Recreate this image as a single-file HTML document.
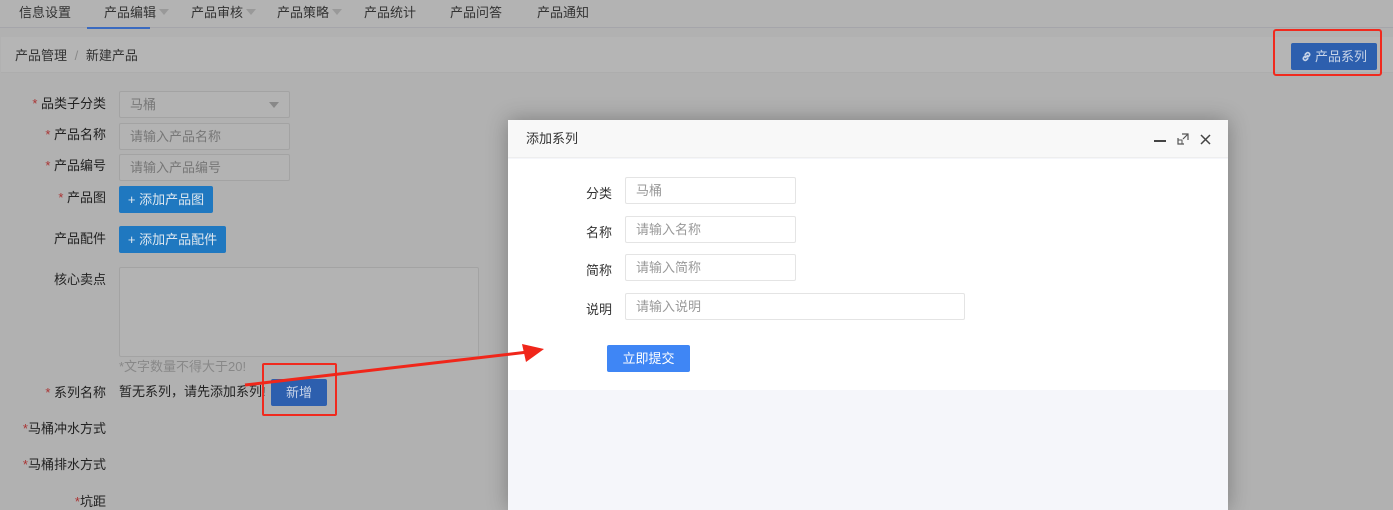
<!DOCTYPE html>
<html style="background:#b1b1b1"><head><meta charset="utf-8"><style>
*{margin:0;padding:0;box-sizing:border-box}
body{width:1393px;height:510px;overflow:hidden;background:#b1b1b1;font-family:"Liberation Sans","Noto Sans CJK SC",sans-serif;font-size:13px;line-height:16px;color:#222;position:relative}
.a{position:absolute;white-space:nowrap}
.bg{left:0;top:0;width:1393px;height:510px;background:#b1b1b1}
.nav{left:0;top:0;width:1393px;height:28px;background:#b3b3b3;border-bottom:1px solid #a5a5aa}
.ni{top:5px;font-size:13px;color:#333}
.tri{display:inline-block;width:0;height:0;border-left:5px solid transparent;border-right:5px solid transparent;border-top:6px solid #999;margin-left:3px;vertical-align:2px}
.bc{left:1px;top:37px;width:1392px;height:36px;background:#b5b5b5;border-bottom:1px solid #adadad}
.lbl{font-size:13px;color:#222;text-align:right;width:100px}
.req{color:#a33}
.inp{background:#b3b3b3;border:1px solid #a3a3a3;border-radius:2px;color:#777;padding-left:10px;font-size:13px}
.btn{background:#1f78c0;color:#dfe8ef;font-size:13px;border-radius:2px;text-align:center}
.dlg{left:508px;top:120px;width:720px;height:390px;background:#f5f6fa;box-shadow:0 0 20px rgba(0,0,0,.3)}
.dh{left:0;top:0;width:720px;height:38px;background:#f8f8f8;border-bottom:1px solid #eee}
.db{left:0;top:39px;width:720px;height:231px;background:#fff}
.di{border:1px solid #e4e4e4;border-radius:2px;height:27px;color:#999;padding-left:10px;line-height:25px;font-size:13px;background:#fff}
.dl{font-size:13px;color:#333}
</style></head><body>
<div class="a bg"></div>
<div class="a nav"></div>
<div class="a ni" style="left:19px">信息设置</div>
<div class="a ni" style="left:104px">产品编辑<span class="tri"></span></div>
<div class="a" style="left:87px;top:27px;width:63px;height:2px;background:#3a6ac0"></div>
<div class="a ni" style="left:191px">产品审核<span class="tri"></span></div>
<div class="a ni" style="left:277px">产品策略<span class="tri"></span></div>
<div class="a ni" style="left:364px">产品统计</div>
<div class="a ni" style="left:450px">产品问答</div>
<div class="a ni" style="left:537px">产品通知</div>
<div class="a bc"></div>
<div class="a" style="left:15px;top:48px;color:#333">产品管理 <span style="color:#888;margin:0 4px">/</span> 新建产品</div>
<div class="a" style="left:1273px;top:29px;width:109px;height:47px;border:2px solid #f02a1e;border-radius:3px"></div>
<div class="a btn" style="left:1291px;top:43px;width:86px;height:27px;line-height:27px;background:#2d5fae;color:#c8d4e8">
<svg width="11" height="11" viewBox="0 0 12 12" style="vertical-align:-1px;margin-right:3px"><g fill="none" stroke="#c8d4e8" stroke-width="1.8" stroke-linecap="round"><path d="M5 7 L7 5"/><path d="M4.5 5.5 L3 7 a2 2 0 0 0 2.8 2.8 L7.3 8.3"/><path d="M7.5 6.5 L9 5 a2 2 0 0 0 -2.8 -2.8 L4.7 3.7"/></g></svg>产品系列</div>

<div class="a lbl" style="left:6px;top:96px"><span class="req">* </span>品类子分类</div>
<div class="a inp" style="left:119px;top:91px;width:171px;height:27px;line-height:25px">马桶<span class="tri" style="position:absolute;right:10px;top:10px;border-top-color:#888"></span></div>
<div class="a lbl" style="left:6px;top:127px"><span class="req">* </span>产品名称</div>
<div class="a inp" style="left:119px;top:123px;width:171px;height:27px;line-height:25px">请输入产品名称</div>
<div class="a lbl" style="left:6px;top:158px"><span class="req">* </span>产品编号</div>
<div class="a inp" style="left:119px;top:154px;width:171px;height:27px;line-height:25px">请输入产品编号</div>
<div class="a lbl" style="left:6px;top:190px"><span class="req">* </span>产品图</div>
<div class="a btn" style="left:119px;top:186px;width:94px;height:27px;line-height:27px">+ 添加产品图</div>
<div class="a lbl" style="left:6px;top:231px">产品配件</div>
<div class="a btn" style="left:119px;top:226px;width:107px;height:27px;line-height:27px">+ 添加产品配件</div>
<div class="a lbl" style="left:6px;top:272px">核心卖点</div>
<div class="a inp" style="left:119px;top:267px;width:360px;height:90px"></div>
<div class="a" style="left:119px;top:359px;color:#888">*文字数量不得大于20!</div>
<div class="a lbl" style="left:6px;top:385px"><span class="req">* </span>系列名称</div>
<div class="a" style="left:119px;top:384px;color:#222">暂无系列，请先添加系列!</div>
<div class="a" style="left:262px;top:363px;width:75px;height:53px;border:2px solid #f02a1e;border-radius:2px"></div>
<div class="a btn" style="left:271px;top:379px;width:56px;height:27px;line-height:27px;background:#2d5fae;color:#c8d4e8">新增</div>
<div class="a lbl" style="left:6px;top:421px"><span class="req">*</span>马桶冲水方式</div>
<div class="a lbl" style="left:6px;top:457px"><span class="req">*</span>马桶排水方式</div>
<div class="a lbl" style="left:6px;top:494px"><span class="req">*</span>坑距</div>

<div class="a dlg">
<div class="a dh"></div>
<div class="a" style="left:18px;top:11px;color:#333">添加系列</div>
<div class="a" style="left:646px;top:20px;width:12px;height:1.5px;background:#444"></div>
<svg class="a" style="left:669px;top:13px" width="12" height="12" viewBox="0 0 12 12"><path d="M1 5V11H7 M5 1H11V7 M11 1L6 6" fill="none" stroke="#555" stroke-width="1.2"/><rect x="1" y="7" width="4" height="4" fill="none" stroke="#555" stroke-width="1"/></svg>
<svg class="a" style="left:692px;top:14px" width="11" height="11" viewBox="0 0 11 11"><path d="M1 1L10 10M10 1L1 10" stroke="#444" stroke-width="1.5"/></svg>
<div class="a db"></div>
<div class="a dl" style="left:78px;top:66px">分类</div>
<div class="a di" style="left:117px;top:57px;width:171px">马桶</div>
<div class="a dl" style="left:78px;top:105px">名称</div>
<div class="a di" style="left:117px;top:96px;width:171px">请输入名称</div>
<div class="a dl" style="left:78px;top:143px">简称</div>
<div class="a di" style="left:117px;top:134px;width:171px">请输入简称</div>
<div class="a dl" style="left:78px;top:182px">说明</div>
<div class="a di" style="left:117px;top:173px;width:340px">请输入说明</div>
<div class="a" style="left:99px;top:225px;width:83px;height:27px;line-height:27px;background:#3f86f5;color:#fff;text-align:center;border-radius:2px;font-size:13px">立即提交</div>
</div>
<svg class="a" style="left:0;top:0" width="1393" height="510"><path d="M245 385 L528 352" stroke="#f0261a" stroke-width="3"/><path d="M544 349 L522 344 L526 362 Z" fill="#f0261a"/></svg>
</body></html>
